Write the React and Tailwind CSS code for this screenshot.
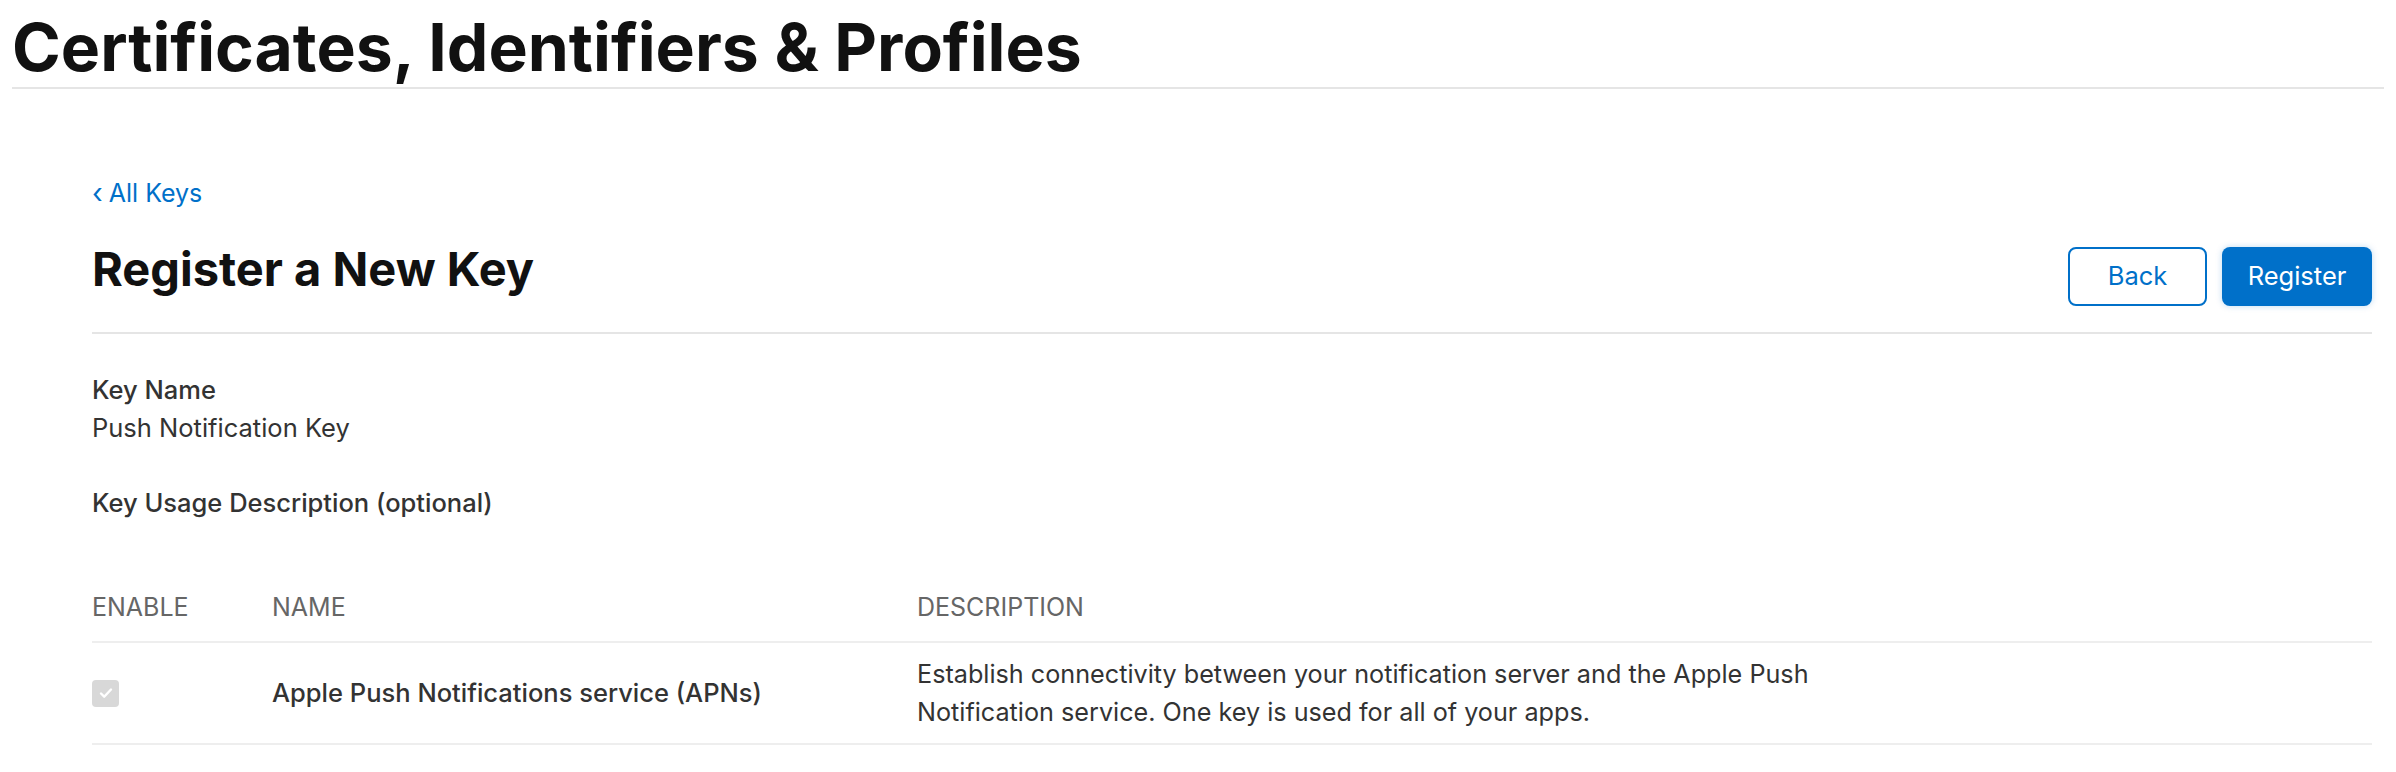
export default function App() {
  return (
    <div className="min-h-screen bg-white font-['Inter','Liberation_Sans',sans-serif] text-[#333]">
      <div className="px-[12px]">
        <h1 className="pt-[14px] pb-[7px] text-[66px] font-bold leading-none text-[#111]">
          Certificates, Identifiers &amp; Profiles
        </h1>
        <div className="h-[2px] bg-[#e5e5e5]" />
      </div>

      <div className="ml-[92px] mr-[24px]">
        <a href="#" className="mt-[88px] flex items-center gap-[6px] text-[25px] leading-[32px] text-[#0070c9]">
          <span className="text-[28px] leading-none">‹</span>
          <span>All Keys</span>
        </a>

        <div className="mt-[38px] flex items-start justify-between border-b-2 border-[#e5e5e5] pb-[26px]">
          <h2 className="text-[47px] font-bold leading-[44px] text-[#111]">Register a New Key</h2>
          <div className="flex gap-[15px]">
            <button className="h-[59px] w-[139px] rounded-[8px] border-2 border-[#0070c9] bg-white text-[25.5px] text-[#0070c9]">
              Back
            </button>
            <button className="h-[59px] w-[150px] rounded-[8px] bg-[#0070c9] text-[25.5px] text-white shadow-[0_0_6px_rgba(0,112,201,0.25)]">
              Register
            </button>
          </div>
        </div>

        <div className="mt-[37px] text-[25.5px] leading-[38px]">
          <div className="font-medium">Key Name</div>
          <div>Push Notification Key</div>
          <div className="mt-[37px] font-medium">Key Usage Description (optional)</div>
        </div>

        <div className="mt-[69px]">
          <div className="flex border-b-2 border-[#eeeeee] pb-[18px] text-[25px] uppercase leading-[32px] text-[#666]">
            <div className="w-[180px]">Enable</div>
            <div className="w-[645px]">Name</div>
            <div>Description</div>
          </div>
          <div className="flex items-center border-b-2 border-[#eeeeee] py-[12px] text-[25.5px] leading-[38px]">
            <div className="w-[180px]">
              <div className="flex h-[27px] w-[27px] items-center justify-center rounded-[4px] bg-[#d8d8d8]">
                <svg width="16" height="16" viewBox="0 0 16 16">
                  <path d="M3 8.5l3.2 3.2L13 4.5" fill="none" stroke="#fff" strokeWidth="2.4" strokeLinecap="round" strokeLinejoin="round" />
                </svg>
              </div>
            </div>
            <div className="w-[645px] font-medium">Apple Push Notifications service (APNs)</div>
            <div className="max-w-[960px] text-[25.2px]">
              Establish connectivity between your notification server and the Apple Push Notification service. One key is used for all of your apps.
            </div>
          </div>
        </div>
      </div>
    </div>
  );
}
